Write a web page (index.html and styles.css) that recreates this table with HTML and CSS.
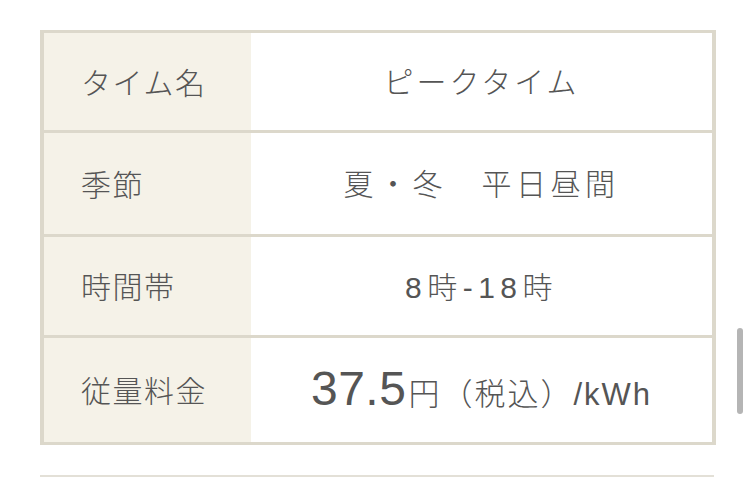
FILE: index.html
```html
<!DOCTYPE html>
<html lang="ja">
<head>
<meta charset="utf-8">
<link rel="stylesheet" href="styles.css">
</head>
<body>
<div class="page">
  <div class="table">
    <div class="row r1">
      <div class="label">タイム名</div>
      <div class="value">ピークタイム</div>
    </div>
    <div class="row r2">
      <div class="label">季節</div>
      <div class="value">夏・冬　平日昼間</div>
    </div>
    <div class="row r3">
      <div class="label">時間帯</div>
      <div class="value">8時-18時</div>
    </div>
    <div class="row r4">
      <div class="label">従量料金</div>
      <div class="value"><span class="price">37.5</span><span class="unit">円（税込）/kWh</span></div>
    </div>
  </div>
  <div class="rule"></div>
</div>
<div class="scrollbar"></div>
</body>
</html>
```
FILE: styles.css
```css
html, body {
  margin: 0;
  padding: 0;
  background: #fff;
}
body {
  width: 750px;
  height: 477px;
  overflow: hidden;
  position: relative;
  font-family: "Liberation Sans", "Noto Sans CJK JP", sans-serif;
  font-weight: 300;
  color: #555;
}
.page {
  padding: 30px 36px 0 40px;
}
.table {
  width: 668px;
  border: 3px solid #dcd8cb;
  border-right-width: 4px;
  border-left-width: 4px;
}
.row {
  display: flex;
  border-top: 3px solid #dcd8cb;
}
.row.r1 { border-top: none; height: 97px; }
.row.r2 { height: 101px; }
.row.r3 { height: 98px; }
.row.r4 { height: 104px; }
.label {
  width: 207px;
  flex: none;
  background: #f5f2e8;
  display: flex;
  align-items: center;
  padding-left: 37px;
  box-sizing: border-box;
  font-size: 30px;
  letter-spacing: 1.5px;
  padding-bottom: 2px;
}
.value {
  flex: 1;
  display: flex;
  align-items: center;
  justify-content: center;
  font-size: 30px;
  letter-spacing: 3px;
  padding-bottom: 3px;
}
.r2 .value {
  letter-spacing: 4.5px;
}
.r3 .value {
  letter-spacing: 5.5px;
}
.price {
  font-size: 48px;
  letter-spacing: 0.5px;
  margin-right: 2px;
}
.unit {
  font-size: 31px;
  letter-spacing: 2px;
  padding-top: 6px;
}
.rule {
  margin-top: 30px;
  width: 674px;
  height: 2px;
  background: #e3e0d7;
}
.scrollbar {
  position: absolute;
  left: 737px;
  top: 328px;
  width: 6px;
  height: 86px;
  border-radius: 3px;
  background: #b5b5b5;
}
```
